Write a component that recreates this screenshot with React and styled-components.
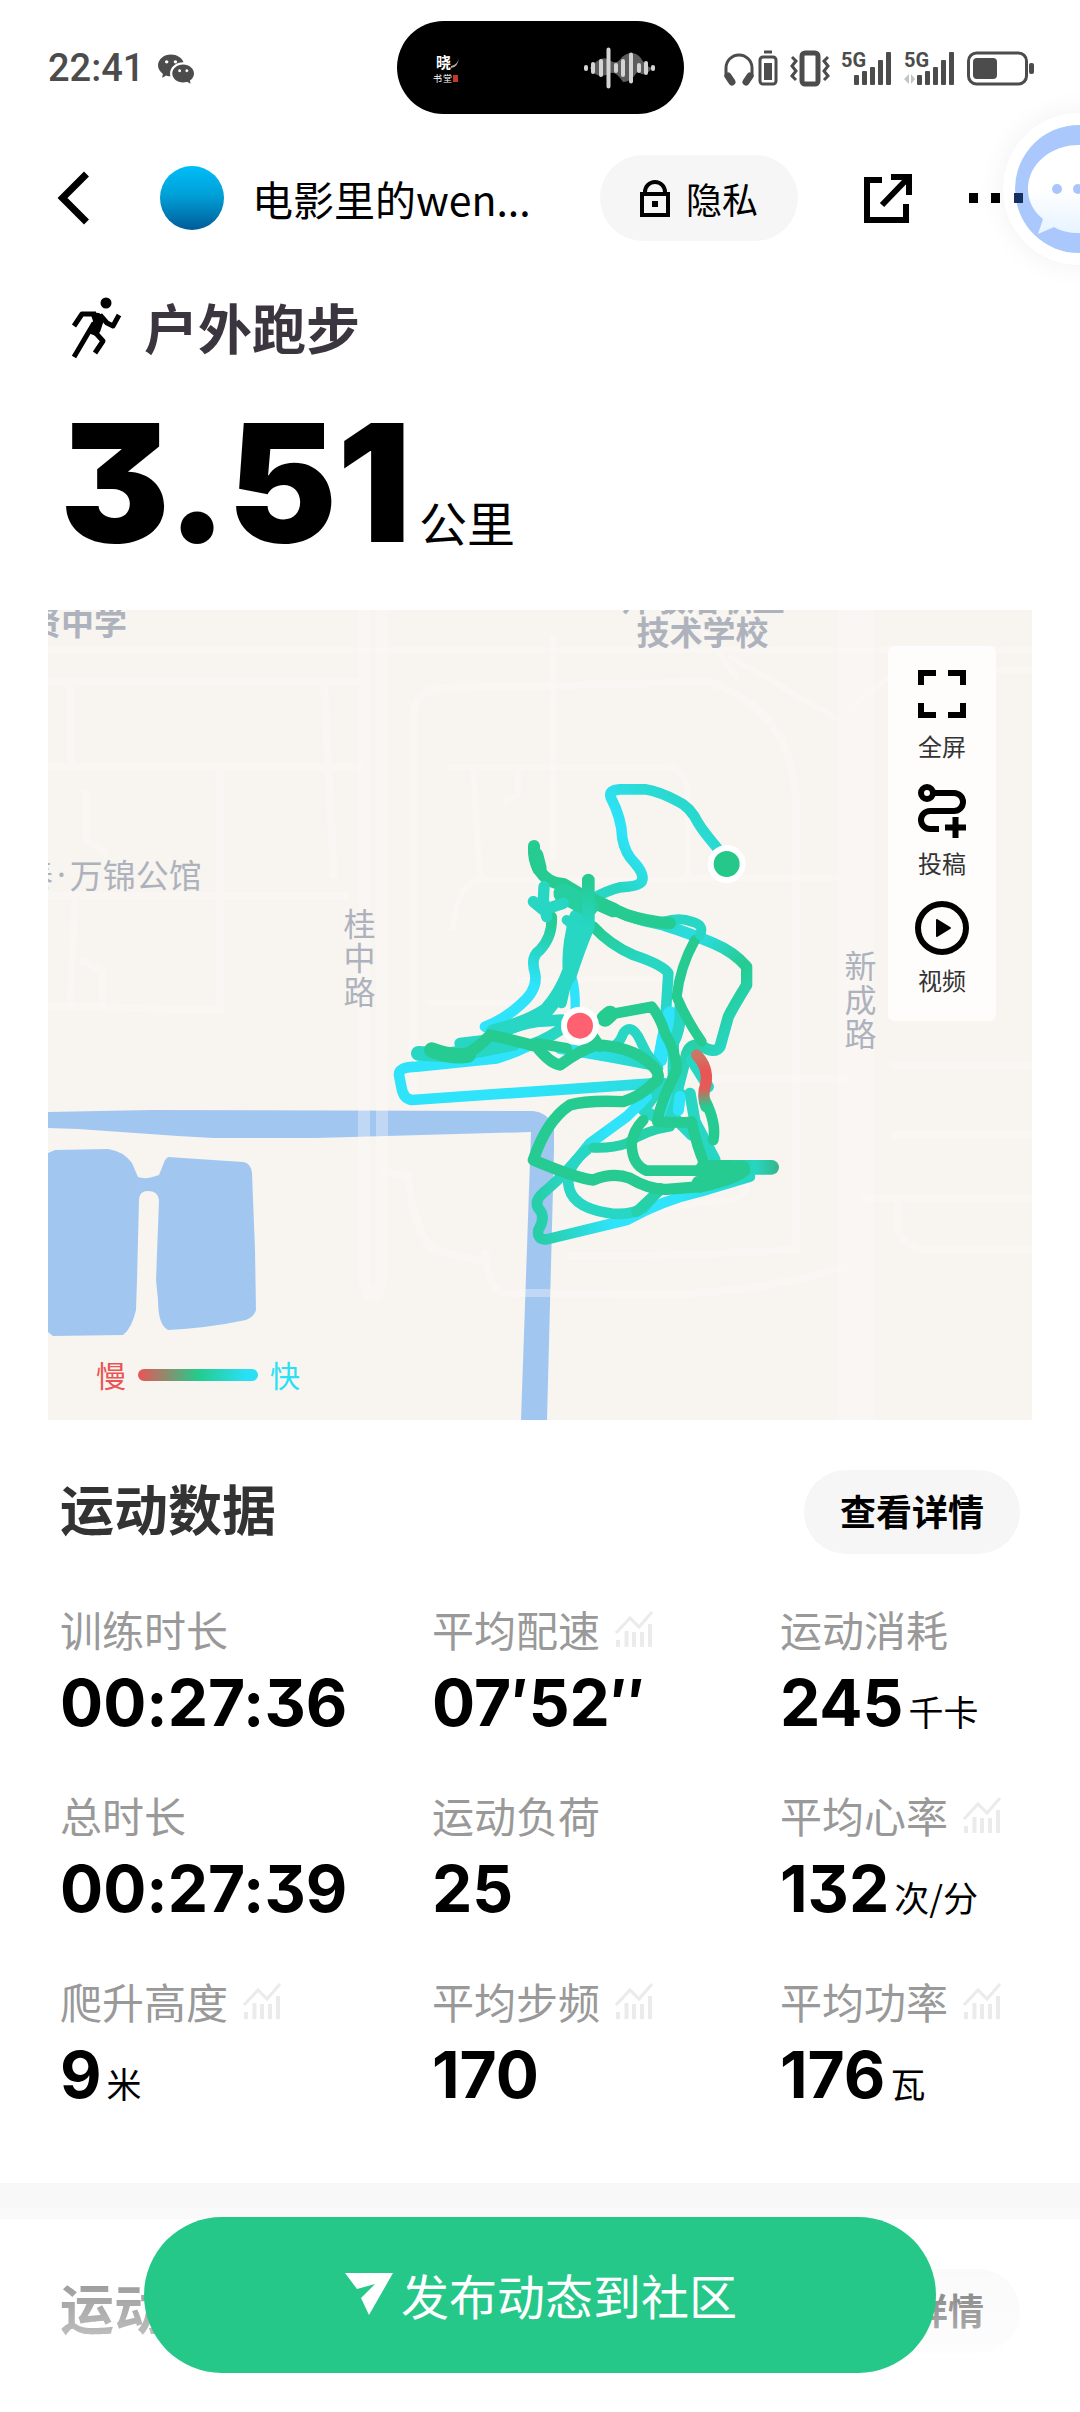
import React from 'react';
import styled, { createGlobalStyle, css } from 'styled-components';
import { BsWechat } from 'react-icons/bs';

const GlobalStyle = createGlobalStyle`
  * {
    box-sizing: border-box;
  }
  body {
    margin: 0;
    background: #fff;
    color: #000;
    font-family: "Noto Sans CJK SC", "Noto Sans", sans-serif;
  }
  button {
    border: 0;
    padding: 0;
    background: none;
    color: inherit;
    font: inherit;
    cursor: pointer;
  }
  svg {
    display: block;
    flex: none;
    overflow: visible;
  }
  h1, h2, p, dl, dt, dd {
    margin: 0;
  }
`;

const Page = styled.div`
  position: relative;
  overflow: hidden;
  padding-bottom: 58px;
`;

/* ---------- status bar ---------- */

const StatusBar = styled.div`
  display: grid;
  grid-template-columns: 1fr 287px 1fr;
  align-items: center;
  height: 135px;
  padding: 0 46px;
  color: #4c4c4c;
`;

const StatusLeft = styled.div`
  display: flex;
  align-items: center;
  gap: 14px;
  padding-left: 2px;
`;

const Clock = styled.span`
  font: 500 38px/48px Roboto, sans-serif;
`;

const Island = styled.div`
  display: flex;
  align-items: center;
  justify-content: space-between;
  height: 93px;
  padding: 0 28px 0 34px;
  border-radius: 47px;
  background: #000;
`;

const StatusRight = styled.div`
  display: flex;
  align-items: center;
  justify-content: flex-end;
  gap: 11px;
`;

/* ---------- header ---------- */

const Header = styled.header`
  display: flex;
  align-items: center;
  height: 126px;
  padding: 0 56px 0 58px;
`;

const IconButton = styled.button`
  position: relative;
  z-index: 1;
  flex: none;
`;

const Avatar = styled.div`
  flex: none;
  width: 64px;
  height: 64px;
  margin: 0 28px 0 70px;
  border-radius: 50%;
  background: linear-gradient(#00bdf8, #00a0d8 45%, #005c98);
`;

const UserName = styled.span`
  flex: 1;
  font-size: 41px;
  line-height: 56px;
  white-space: nowrap;
`;

const PrivacyButton = styled.button`
  display: flex;
  flex: none;
  align-items: center;
  justify-content: center;
  gap: 16px;
  width: 198px;
  height: 86px;
  margin-right: 66px;
  border-radius: 43px;
  background: #f6f6f6;
  font-size: 36px;
`;

const ShareButton = styled(IconButton)`
  margin-right: 56px;
`;

const ChatBubble = styled.button`
  position: absolute;
  top: 113px;
  right: -75px;
  width: 152px;
  height: 152px;
  border-radius: 50%;
  background: #fff;
  box-shadow: 0 0 30px rgba(0, 0, 0, 0.06);
`;

/* ---------- summary ---------- */

const Summary = styled.section`
  padding: 32px 60px 0;
`;

const SportTitle = styled.h1`
  display: flex;
  align-items: center;
  gap: 20px;
  height: 66px;
  padding-left: 10px;
  color: #3b3540;
  font-size: 54px;
  font-weight: 700;
`;

const Distance = styled.p`
  display: flex;
  align-items: baseline;
  gap: 8px;
  height: 251px;
  font-size: 48px;
  line-height: 248px;
`;

const DistanceNumber = styled.span`
  font-family: Inter, sans-serif;
  font-size: 164px;
  font-weight: 900;
  font-feature-settings: "cv09";
`;

/* ---------- map ---------- */

const MapCard = styled.section`
  position: relative;
  height: 810px;
  margin: 0 48px;
  overflow: hidden;
  background: #f8f5f0;
`;

const MapLabel = styled.span`
  position: absolute;
  left: ${p => p.$x}px;
  top: ${p => p.$y}px;
  display: flex;
  gap: 4px;
  color: #adb2bc;
  font-size: 33px;
  font-weight: ${p => (p.$bold ? 700 : 400)};
  line-height: 34px;
  text-align: center;
  white-space: pre;
  ${p => p.$vertical && css`
    display: block;
    width: 33px;
    font-size: 32px;
    white-space: normal;
  `}
`;

const MapDot = styled.span`
  font-family: "Noto Sans", sans-serif;
`;

const MapTools = styled.div`
  position: absolute;
  top: 36px;
  right: 36px;
  display: flex;
  flex-direction: column;
  gap: 21px;
  width: 108px;
  padding: 21px 0 24px;
  border-radius: 6px;
  background: rgba(255, 255, 255, 0.8);
`;

const MapTool = styled.button`
  display: flex;
  flex-direction: column;
  align-items: center;
  gap: 8px;
  color: #333;
  font-size: 24px;
  line-height: 34px;
`;

const Legend = styled.div`
  position: absolute;
  left: 48px;
  bottom: 24px;
  display: flex;
  align-items: center;
  gap: 12px;
  font-size: 30px;
  line-height: 40px;
`;

const LegendEnd = styled.span`
  padding-bottom: 2px;
  color: ${p => p.$color};
`;

const LegendBar = styled.div`
  width: 120px;
  height: 12px;
  border-radius: 6px;
  background: linear-gradient(90deg, #ea5455, #24cb8b 50%, #2ae0f5 90%);
`;

/* ---------- data ---------- */

const SectionHead = styled.div`
  display: flex;
  align-items: flex-start;
  justify-content: space-between;
  padding: 50px 60px 0;
`;

const SectionTitle = styled.h2`
  color: #333;
  font-size: 54px;
  font-weight: 700;
  line-height: 76px;
`;

const DetailButton = styled.button`
  width: 216px;
  height: 84px;
  padding-bottom: 4px;
  border-radius: 42px;
  background: #f6f6f6;
  font-size: 36px;
  font-weight: 700;
`;

const StatGrid = styled.dl`
  display: grid;
  grid-template-columns: 372fr 348fr 240fr;
  row-gap: 44px;
  padding: 47px 60px 68px;
`;

const StatLabel = styled.dt`
  display: flex;
  align-items: center;
  gap: 16px;
  margin-bottom: 5px;
  color: #999;
  font-size: 42px;
  line-height: 56px;
  white-space: nowrap;
`;

const StatValue = styled.dd`
  display: flex;
  align-items: baseline;
  gap: 5px;
  height: 81px;
  font-size: 35px;
  line-height: 81px;
  white-space: nowrap;
`;

const StatNumber = styled.span`
  font-family: Inter, sans-serif;
  font-size: 64px;
  font-weight: 700;
  font-feature-settings: "cv09", "calt" 0;
`;

const Divider = styled.div`
  height: 36px;
  background: #f8f8f8;
`;

const Footer = styled.footer`
  position: fixed;
  right: 0;
  bottom: 0;
  left: 0;
  height: 204px;
  padding: 9px 144px 39px;
  background: linear-gradient(rgba(255, 255, 255, 0.3), rgba(255, 255, 255, 0.9));
`;

const PublishButton = styled.button`
  display: flex;
  align-items: center;
  justify-content: center;
  gap: 8px;
  width: 100%;
  height: 156px;
  padding: 0 0 2px 2px;
  border-radius: 78px;
  background: #25c889;
  color: #fff;
  font-size: 48px;
`;

/* ---------- icons ---------- */

const SealLogo = () => (
  <svg width="30" height="38" viewBox="0 0 30 38" fill="#fff" fontFamily="Noto Sans CJK SC, sans-serif">
    <text x="5" y="19" fontSize="15" fontWeight="700">晓</text>
    <text x="2" y="33" fontSize="9">书</text>
    <text x="12" y="33" fontSize="9">堂</text>
    <path d="M20 17q7-1 8-9q-1 11-8 11z" fill="#b9a9a9" />
    <rect x="22" y="26" width="5" height="7" fill="#c0392b" />
  </svg>
);

const WAVE_BARS = [
  [2, 6], [9, 12], [17, 18], [24.5, 41], [32, 10], [39, 18], [47, 31], [55, 10], [62, 14], [69, 6],
];

const WaveIcon = () => (
  <svg width="72" height="42" viewBox="0 0 72 42">
    <path d="M6 21Q18 6 27 14Q33 18 38 10Q48 2 56 10Q62 20 68 21Q60 32 54 24Q46 36 39 35Q32 24 26 26Q14 34 6 21Z" fill="#5c5c5c" />
    {WAVE_BARS.map(([x, h]) => (
      <rect key={x} x={x - 2} y={21 - h / 2} width="4" height={h} rx="2" fill="#d4d4d4" />
    ))}
  </svg>
);

const HeadphoneIcon = () => (
  <svg width="56" height="36" viewBox="0 0 56 36" fill="none" stroke="#4c4c4c">
    <path d="M3 27V18a13 13 0 0 1 26 0v9" strokeWidth="3" />
    <path d="M5 26l4 6M27 26l-4 6" strokeWidth="7" strokeLinecap="round" />
    <rect x="37" y="7" width="16" height="27" rx="3" strokeWidth="3" />
    <path d="M41 13h8v17h-8z" fill="#4c4c4c" stroke="none" />
    <path d="M41 2h8" strokeWidth="3" />
  </svg>
);

const VibrateIcon = () => (
  <svg width="40" height="36" viewBox="0 0 40 36" fill="none" stroke="#4c4c4c">
    <rect x="12" y="3" width="16" height="31" rx="3" strokeWidth="5" />
    <path d="M2 7l4 4-4 5 4 5-4 5 4 4M38 7l-4 4 4 5-4 5 4 5-4 4" strokeWidth="3" />
  </svg>
);

const SignalIcon = ({ transfer }) => (
  <svg width="52" height="36" viewBox="0 0 52 36" fill="#4c4c4c">
    <text x="0" y="17" fontFamily="Roboto, sans-serif" fontSize="20" fontWeight="700">5G</text>
    {[10, 14, 18, 25, 33].map((h, i) => (
      <rect key={h} x={13 + i * 8} y={35 - h} width="5" height={h} rx="1" />
    ))}
    {transfer && <path d="M0 29l5-5v10zM11 29l-4-5v10z" fill="#c4c4c4" />}
  </svg>
);

const BatteryIcon = () => (
  <svg width="67" height="36" viewBox="0 0 67 36" fill="none">
    <rect x="1.500" y="3" width="58" height="31" rx="8" stroke="#4c4c4c" strokeWidth="3" />
    <rect x="6" y="8" width="24" height="21" rx="4" fill="#4c4c4c" />
    <rect x="62" y="13" width="5" height="11" rx="2" fill="#4c4c4c" />
  </svg>
);

const BackIcon = () => (
  <svg width="32" height="54" viewBox="0 0 32 54" fill="none" stroke="#000" strokeWidth="7">
    <path d="M28.500 3L4.500 27l24 24" />
  </svg>
);

const LockIcon = () => (
  <svg width="30" height="38" viewBox="0 0 30 38" fill="none" stroke="#000" strokeWidth="4">
    <path d="M2 15h26v21H2zM5 15v-2a10 10 0 0 1 20 0v2" />
    <path d="M12 22h6v6h-6z" fill="#000" stroke="none" />
  </svg>
);

const ShareIcon = () => (
  <svg width="48" height="50" viewBox="0 0 48 50" fill="none" stroke="#000" strokeWidth="6">
    <path d="M18 7H3v40h39V31" />
    <path d="M27 4h18v18M45 4L18 32" />
  </svg>
);

const MoreIcon = () => (
  <svg width="56" height="10" viewBox="0 0 56 10">
    <path d="M1 0h9v10H1zM23 0h9v10h-9z" />
    <path d="M46 0h9v10h-9z" fill="#16305e" />
  </svg>
);

const BubbleIcon = () => (
  <svg width="152" height="152" viewBox="0 0 152 152">
    <defs>
      <linearGradient id="bubble" x1="0" y1="0" x2="0" y2="1">
        <stop offset="0.5" stopColor="#fff" />
        <stop offset="1" stopColor="#e6f3ff" />
      </linearGradient>
    </defs>
    <circle cx="76" cy="76" r="64" fill="#abc8fd" />
    <path d="M76 32c28 0 50 19 50 44s-22 44-50 44c-10 0-18-2-25-6l-16 7 5-15c-10-8-15-18-15-30 0-25 23-44 51-44z" fill="url(#bubble)" />
    <circle cx="54" cy="76" r="5" fill="#a9c6fb" />
    <circle cx="75" cy="76" r="5" fill="#a9c6fb" />
    <circle cx="96" cy="76" r="5" fill="#a9c6fb" />
  </svg>
);

const RunnerIcon = () => (
  <svg width="54" height="62" viewBox="0 0 54 62" fill="none" stroke="#000" strokeWidth="6" strokeLinejoin="round">
    <circle cx="36" cy="8" r="5.500" fill="#000" stroke="none" />
    <path d="M4 31l8-12h14" strokeWidth="5" />
    <path d="M20 17l9 1 6 4-5 15-4 4-8-3 5-12z" fill="#000" stroke="none" />
    <path d="M30 20l7 8 6 3 6-11" strokeWidth="5" />
    <path d="M24 28L4 62M23 35l10 11-8 12" strokeWidth="5" />
  </svg>
);

const FullscreenIcon = () => (
  <svg width="54" height="54" viewBox="0 0 54 54" fill="none" stroke="#000" strokeWidth="6">
    <path d="M6 18V6h15M33 6h15v12M48 36v12H33M21 48H6V36" />
  </svg>
);

const RouteIcon = () => (
  <svg width="54" height="54" viewBox="0 0 54 54" fill="none" stroke="#000" strokeWidth="6">
    <circle cx="12" cy="9" r="6" />
    <path d="M18 9h21a9 9 0 0 1 0 18H15a9 9 0 0 0 0 18h9M30 43.500h21M40.500 33v21" />
  </svg>
);

const PlayIcon = () => (
  <svg width="54" height="54" viewBox="0 0 54 54">
    <circle cx="27" cy="27" r="24" fill="none" stroke="#000" strokeWidth="6" />
    <path d="M22 19l13 8-13 8z" stroke="#000" strokeWidth="2" strokeLinejoin="round" />
  </svg>
);

const TrendIcon = () => (
  <svg width="36" height="36" viewBox="0 0 36 36" fill="none" stroke="#ebebeb">
    <path d="M0 22L14 7l9 9L36 1" strokeWidth="3" />
    <path d="M2 36v-7M10.500 36V20M18 36V21M26 36V21M34 36V13" strokeWidth="4" />
  </svg>
);

const SendIcon = () => (
  <svg width="48" height="42" viewBox="0 0 48 42" fill="#fff">
    <path d="M0 0h48L24 42l-8-17 14-14-18 5z" />
  </svg>
);

/* ---------- map drawing ---------- */

const ROADS = [
  [12, 'M316 0V670L322 690M334 0V670L326 690'],
  [36, 'M808 0V810'],
  [8, 'M0 72H310M0 157H316M0 286H300M23 72V157M276 72L286 268M172 157V400L0 396'],
  [7, 'M38 180V230L60 245M27 290L22 396M32 350L54 360V396M505 25V250'],
  [8, 'M365 490V110Q366 82 390 78L660 72Q748 100 748 200V640L600 646H520'],
  [6, 'M400 157H620Q640 160 640 190V268H790M425 157L432 268M470 157V185L455 192M405 320Q408 275 430 270H640'],
  [8, 'M332 560L360 566Q366 620 385 640L434 652M437 640Q440 684 460 683H560Q700 690 800 655'],
  [8, 'M661 469H800M813 588H984M843 456H984M843 525H984M850 590V620Q860 640 880 640H984'],
  [6, 'M640 0L690 70M0 40H984M680 45L790 110M800 100L850 60H984'],
  [6, 'M470 370Q600 368 640 370V430M380 393H470M700 570Q698 590 680 590L600 600'],
];

const CYAN = '#2ee3fa';
const TEAL = '#27d6c3';
const GREEN = '#25cb90';

// stroke, width, path; drawn in order, so later legs lie over earlier ones
const LEGS = [
  ['url(#loop)', 32, 'M1040 312L1010 262Q970 215 955 190Q930 140 895 125Q840 95 795 88L720 88Q685 90 692 112Q725 175 727 235Q735 280 765 310Q795 345 785 365Q775 380 720 382Q680 392 640 415'],
  ['url(#down)', 32, 'M515 470Q518 530 480 570Q450 590 465 640Q475 690 420 735Q370 780 315 800'],
  [CYAN, 28, 'M578 660Q588 700 585 760'],
  [TEAL, 44, 'M590 470Q565 560 570 630Q545 700 500 750Q440 790 340 815'],
  [TEAL, 30, 'M560 480Q600 500 570 620L545 730M600 500L575 640'],
  [TEAL, 34, 'M545 780L470 785Q380 800 330 840L240 850M540 810Q480 850 430 860'],
  ['url(#across)', 34, 'M540 865Q700 890 820 915'],
  ['url(#loopLeft)', 32, 'M820 970L95 1020Q70 1015 65 985L57 945Q55 920 110 920L350 895Q400 880 440 860'],
  [TEAL, 44, 'M115 880L200 885L300 870L400 850'],
  ['url(#mid)', 32, 'M640 500Q690 555 760 585Q850 615 865 640L855 800L835 900'],
  [CYAN, 42, 'M870 760Q850 830 840 900'],
  [TEAL, 34, 'M900 740Q905 800 880 850L880 960'],
  ['url(#outer)', 34, 'M640 420Q740 475 850 495Q930 520 1000 550Q1060 575 1100 620L1100 675Q1060 740 1045 770L1020 860Q1005 885 960 855Q925 850 918 890L890 1000L885 1050'],
  [TEAL, 34, 'M850 970L790 1050L850 1085M930 1000L945 1085L1005 1200M900 1000L870 1060L935 1125M935 900L985 980'],
  [CYAN, 34, 'M860 1000L840 1060M900 1010L895 1050'],
  [TEAL, 30, 'M690 860Q715 860 730 820Q750 790 775 830L800 880L835 925'],
  ['url(#diag)', 32, 'M800 1010L740 1070L630 1150Q560 1240 500 1290Q460 1320 475 1345Q500 1370 475 1410Q470 1440 500 1438L740 1380Q850 1320 960 1295L1110 1250'],
  [TEAL, 32, 'M620 1170Q560 1220 565 1270Q570 1340 680 1358Q740 1370 790 1345L840 1285'],
  ['#26d0a8', 30, 'M640 1163Q700 1165 740 1150Q800 1110 870 1100'],
  ['#26d0a8', 32, 'M840 1290L770 1355'],
  [GREEN, 30, 'M945 540Q900 620 890 710Q920 780 965 845'],
  [TEAL, 30, 'M850 485Q900 470 935 485Q975 495 960 525'],
  [GREEN, 36, 'M462 258Q460 300 475 325Q500 370 550 372L605 405L740 465Q800 485 870 490'],
  [GREEN, 44, 'M468 285L478 325M620 415L700 450'],
  ['#26cfa0', 60, 'M550 400L625 440'],
  [TEAL, 34, 'M492 380L490 420L500 470M460 425L490 450L550 430'],
  ['url(#fall)', 38, 'M625 360V500Q595 570 570 650'],
  [GREEN, 46, 'M155 870Q220 895 265 885'],
  [GREEN, 34, 'M250 885Q290 870 330 825Q420 845 470 860Q510 910 540 915Q600 870 650 855Q740 860 790 895Q860 945 820 970Q780 1010 730 1025Q620 1020 570 1035Q500 1080 460 1200Q590 1255 640 1260Q700 1235 750 1255Q810 1290 860 1288L960 1280'],
  [GREEN, 32, 'M470 850L560 865M640 830L660 860'],
  [GREEN, 50, 'M675 775L690 762'],
  [GREEN, 32, 'M680 765L815 740Q840 770 855 820Q890 880 890 930Q840 1030 832 1085Q900 1090 935 1085Q950 1160 975 1215'],
  [GREEN, 32, 'M970 1232H800Q755 1215 755 1150Q760 1110 790 1080'],
  ['url(#tail)', 44, 'M970 1222H1175'],
  [GREEN, 52, 'M960 1272Q1060 1250 1085 1228'],
  [GREEN, 32, 'M975 1020Q1010 1090 1000 1140'],
  ['url(#slow)', 34, 'M950 885Q985 920 978 970Q965 1010 978 1040'],
];

const Gradient = ({ id, from, to, stops }) => (
  <linearGradient id={id} gradientUnits="userSpaceOnUse" x1={from[0]} y1={from[1]} x2={to[0]} y2={to[1]}>
    {stops.map((color, i) => (
      <stop key={i} offset={i / (stops.length - 1)} stopColor={color} />
    ))}
  </linearGradient>
);

const MapSvg = () => (
  <svg width="100%" height="100%" viewBox="0 0 984 810" preserveAspectRatio="xMidYMid slice">
    <defs>
      <Gradient id="loop" from={[980, 100]} to={[720, 380]} stops={[TEAL, '#2adbd8', CYAN, TEAL]} />
      <Gradient id="down" from={[510, 470]} to={[400, 760]} stops={[GREEN, TEAL, CYAN, CYAN]} />
      <Gradient id="across" from={[540, 865]} to={[820, 915]} stops={[CYAN, TEAL]} />
      <Gradient id="loopLeft" from={[60, 980]} to={[820, 970]} stops={[CYAN, CYAN, '#2adcdc']} />
      <Gradient id="mid" from={[650, 500]} to={[850, 900]} stops={[GREEN, TEAL, TEAL, CYAN]} />
      <Gradient id="outer" from={[640, 420]} to={[1040, 860]} stops={[GREEN, TEAL, '#2bdde3', GREEN, TEAL]} />
      <Gradient id="diag" from={[480, 1290]} to={[1110, 1250]} stops={['#27cfa9', CYAN, CYAN, TEAL]} />
      <Gradient id="fall" from={[625, 355]} to={[600, 640]} stops={[GREEN, TEAL, '#27d6c3']} />
      <Gradient id="tail" from={[1050, 1220]} to={[1200, 1220]} stops={[GREEN, TEAL, '#36b487']} />
      <Gradient id="slow" from={[950, 885]} to={[970, 1040]} stops={['#c97866', '#ea5455', '#e25d58', GREEN]} />
    </defs>
    <g fill="#a1c7f1">
      <path d="M0 502L103 500L485 501Q498 502 506 515V540L499 810H473L483 522L268 528L165 528L130 526L30 519L0 518Z" />
      <path d="M0 543L7 540L60 539Q75 541 84 553L90 567Q98 570 111 565L117 550L120 547L195 552Q203 553 204 563L207 640L208 700Q206 707 198 710Q160 718 120 720Q110 715 110 690L108 670L111 590Q110 581 100 581Q91 581 91 590L89 670L88 700Q84 718 75 725L5 726L0 722Z" />
    </g>
    <g fill="none" stroke="#fcfaf8" strokeOpacity="0.35" strokeLinejoin="round">
      {ROADS.map(([w, d]) => <path key={d} d={d} strokeWidth={w} />)}
    </g>
    {/* the run itself is plotted on a grid three times finer than the map */}
    <g transform="translate(332 150) scale(0.33333)">
      <g fill="none" strokeLinecap="round" strokeLinejoin="round">
        {LEGS.map(([stroke, w, d]) => <path key={d} d={d} stroke={stroke} strokeWidth={w} />)}
      </g>
      <circle cx="1040" cy="312" r="48" fill="#25c889" stroke="#fff" strokeWidth="18" />
      <circle cx="600" cy="797" r="48" fill="#ff6170" stroke="#fff" strokeWidth="18" />
    </g>
  </svg>
);

/* ---------- page ---------- */

const STATS = [
  { label: '训练时长', value: '00:27:36' },
  { label: '平均配速', value: '07′52″', trend: true },
  { label: '运动消耗', value: '245', unit: '千卡' },
  { label: '总时长', value: '00:27:39' },
  { label: '运动负荷', value: '25' },
  { label: '平均心率', value: '132', unit: '次/分', trend: true },
  { label: '爬升高度', value: '9', unit: '米', trend: true },
  { label: '平均步频', value: '170', trend: true },
  { label: '平均功率', value: '176', unit: '瓦', trend: true },
];

const Stat = ({ label, value, unit, trend }) => (
  <div>
    <StatLabel>{label}{trend && <TrendIcon />}</StatLabel>
    <StatValue>
      <StatNumber>{value}</StatNumber>
      {unit && <span>{unit}</span>}
    </StatValue>
  </div>
);

const App = () => (
  <>
    <GlobalStyle />
    <Page>
      <StatusBar>
        <StatusLeft>
          <Clock>22:41</Clock>
          <BsWechat size={36} />
        </StatusLeft>
        <Island>
          <SealLogo />
          <WaveIcon />
        </Island>
        <StatusRight>
          <HeadphoneIcon />
          <VibrateIcon />
          <SignalIcon />
          <SignalIcon transfer />
          <BatteryIcon />
        </StatusRight>
      </StatusBar>
      <ChatBubble aria-label="消息"><BubbleIcon /></ChatBubble>
      <Header>
        <IconButton aria-label="返回"><BackIcon /></IconButton>
        <Avatar />
        <UserName>电影里的wen...</UserName>
        <PrivacyButton><LockIcon />隐私</PrivacyButton>
        <ShareButton aria-label="分享"><ShareIcon /></ShareButton>
        <IconButton aria-label="更多"><MoreIcon /></IconButton>
      </Header>
      <Summary>
        <SportTitle><RunnerIcon />户外跑步</SportTitle>
        <Distance>
          <DistanceNumber>3.51</DistanceNumber>
          <span>公里</span>
        </Distance>
      </Summary>
      <MapCard>
        <MapSvg />
        <MapLabel $x={-20} $y={-6} $bold>贤中学</MapLabel>
        <MapLabel $x={572} $y={-30} $bold>{'师敬活职业\n技术学校'}</MapLabel>
        <MapLabel $x={-28} $y={247}><span>泰</span><MapDot>·</MapDot><span>万锦公馆</span></MapLabel>
        <MapLabel $x={295} $y={295} $vertical>桂中路</MapLabel>
        <MapLabel $x={796} $y={337} $vertical>新成路</MapLabel>
        <MapTools>
          <MapTool><FullscreenIcon />全屏</MapTool>
          <MapTool><RouteIcon />投稿</MapTool>
          <MapTool><PlayIcon />视频</MapTool>
        </MapTools>
        <Legend>
          <LegendEnd $color="#ea5455">慢</LegendEnd>
          <LegendBar />
          <LegendEnd $color="#2ae0f5">快</LegendEnd>
        </Legend>
      </MapCard>
      <SectionHead>
        <SectionTitle>运动数据</SectionTitle>
        <DetailButton>查看详情</DetailButton>
      </SectionHead>
      <StatGrid>
        {STATS.map(stat => <Stat key={stat.label} {...stat} />)}
      </StatGrid>
      <Divider />
      <SectionHead>
        <SectionTitle>运动分析</SectionTitle>
        <DetailButton>查看详情</DetailButton>
      </SectionHead>
    </Page>
    <Footer>
      <PublishButton><SendIcon />发布动态到社区</PublishButton>
    </Footer>
  </>
);

export default App;
